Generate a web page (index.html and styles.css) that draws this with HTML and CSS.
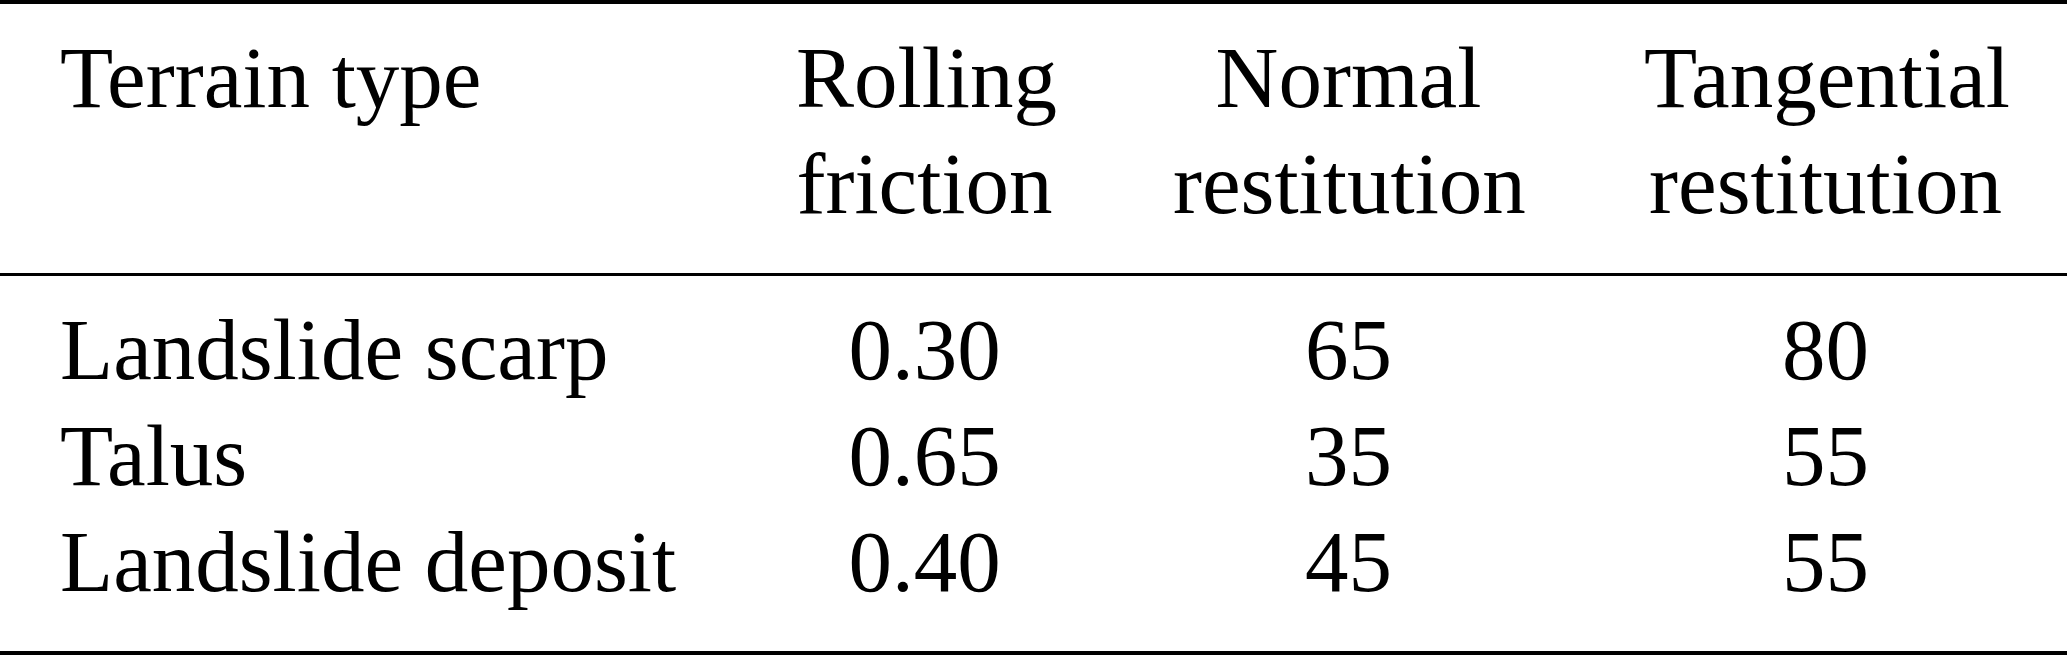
FILE: index.html
```html
<!DOCTYPE html>
<html lang="en">
<head>
    <meta charset="UTF-8">
    <meta name="viewport" content="width=device-width, initial-scale=1.0">
    <title>Terrain parameters</title>
    <link rel="stylesheet" href="styles.css">
</head>
<body>
    <table class="terrain-table">
        <colgroup>
            <col class="col-type">
            <col class="col-friction">
            <col class="col-normal">
            <col>
        </colgroup>
        <thead>
            <tr>
                <th class="label">Terrain type</th>
                <th>Rolling<br>friction</th>
                <th>Normal<br>restitution</th>
                <th>Tangential<br>restitution</th>
            </tr>
        </thead>
        <tbody>
            <tr class="first-row">
                <td class="label">Landslide scarp</td>
                <td>0.30</td>
                <td>65</td>
                <td>80</td>
            </tr>
            <tr>
                <td class="label">Talus</td>
                <td>0.65</td>
                <td>35</td>
                <td>55</td>
            </tr>
            <tr class="last-row">
                <td class="label">Landslide deposit</td>
                <td>0.40</td>
                <td>45</td>
                <td>55</td>
            </tr>
        </tbody>
    </table>
</body>
</html>
```

FILE: styles.css
```css
:root {
    --rule-color: #000;
    --text-color: #000;
}

body {
    margin: 0;
    background: white;
    color: var(--text-color);
    font-family: 'Liberation Serif', 'Times New Roman', serif;
}

.terrain-table {
    width: 100%;
    table-layout: fixed;
    border-collapse: separate;
    border-spacing: 0;
    font-size: 87px;
    line-height: 106px;
}

.col-type {
    width: 736px;
}

.col-friction {
    width: 377px;
}

.col-normal {
    width: 471px;
}

.terrain-table th,
.terrain-table td {
    padding: 0 60px;
    text-align: center;
    vertical-align: top;
    font-weight: normal;
    white-space: nowrap;
}

.terrain-table .label {
    text-align: left;
}

/* booktabs style rules */
.terrain-table th {
    border-top: 4px solid var(--rule-color);
    border-bottom: 3px solid var(--rule-color);
    padding-top: 21px;
    padding-bottom: 36px;
}

.first-row td {
    padding-top: 21px;
}

.last-row td {
    padding-bottom: 36px;
    border-bottom: 4px solid var(--rule-color);
}
```
